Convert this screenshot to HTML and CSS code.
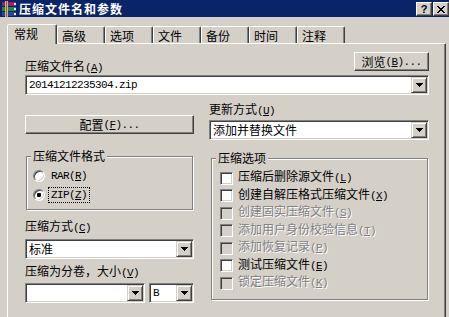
FILE: index.html
```html
<!DOCTYPE html>
<html lang="zh-CN">
<head>
<meta charset="utf-8">
<title>压缩文件名和参数</title>
<link rel="stylesheet" href="styles.css">
</head>
<body>
<div class="titlebar">
  <svg class="appicon" viewBox="0 0 16 16" shape-rendering="crispEdges">
    <rect x="1" y="1" width="14" height="4" fill="#9a1f74"/>
    <rect x="1" y="6" width="14" height="4" fill="#1f8a3c"/>
    <rect x="1" y="11" width="14" height="4" fill="#2543a8"/>
    <rect x="13" y="2" width="2" height="2" fill="#f0e8f0"/>
    <rect x="13" y="7" width="2" height="2" fill="#e8f4e8"/>
    <rect x="13" y="12" width="2" height="2" fill="#e8ecf8"/>
    <rect x="4" y="0" width="3" height="16" fill="#d2b07a"/>
    <rect x="5" y="0" width="1" height="16" fill="#8a6a3a"/>
  </svg>
  <span class="title">压缩文件名和参数</span>
  <div class="caption-btns">
    <span class="cbtn help">?</span>
    <span class="cbtn">
      <svg width="8" height="7" viewBox="0 0 8 7" shape-rendering="crispEdges"><path d="M0 0h2v1H0zM6 0h2v1H6zM1 1h2v1H1zM5 1h2v1H5zM2 2h4v1H2zM3 3h2v1H3zM2 4h4v1H2zM1 5h2v1H1zM5 5h2v1H5zM0 6h2v1H0zM6 6h2v1H6z" fill="#000"/></svg>
    </span>
  </div>
</div>

<div class="tabs">
  <div class="tab active">常规</div>
  <div class="tab">高级</div>
  <div class="tab">选项</div>
  <div class="tab">文件</div>
  <div class="tab">备份</div>
  <div class="tab">时间</div>
  <div class="tab">注释</div>
</div>

<div class="panel">
  <div class="row-top">
    <span class="label top-label">压缩文件名<span class="en">(<u>A</u>)</span></span>
    <span class="btn browse">浏览<span class="en">(<u>B</u>)...</span></span>
  </div>
  <div class="combo filename">
    <span class="value en">20141212235304.zip</span>
    <span class="dd"><svg width="7" height="4" viewBox="0 0 7 4" shape-rendering="crispEdges"><path d="M0 0h7v1H0zM1 1h5v1H1zM2 2h3v1H2zM3 3h1v1H3z" fill="#000"/></svg></span>
  </div>

  <div class="cols">
    <div class="col-left">
      <span class="btn cfg">配置<span class="en">(<u>F</u>)...</span></span>

      <div class="group fmt">
        <span class="legend">压缩文件格式</span>
        <div class="radio-row first">
          <span class="radio"></span>
          <span class="rlabel en">RAR(<u>R</u>)</span>
        </div>
        <div class="radio-row">
          <span class="radio checked"></span>
          <span class="rlabel en focus">ZIP(<u>Z</u>)</span>
        </div>
      </div>

      <div class="label method-label">压缩方式<span class="en">(<u>C</u>)</span></div>
      <div class="combo method">
        <span class="value">标准</span>
        <span class="dd"><svg width="7" height="4" viewBox="0 0 7 4" shape-rendering="crispEdges"><path d="M0 0h7v1H0zM1 1h5v1H1zM2 2h3v1H2zM3 3h1v1H3z" fill="#000"/></svg></span>
      </div>

      <div class="label vol-label">压缩为分卷，大小<span class="en">(<u>V</u>)</span></div>
      <div class="vol-row">
        <div class="combo vol">
          <span class="value"></span>
          <span class="dd"><svg width="7" height="4" viewBox="0 0 7 4" shape-rendering="crispEdges"><path d="M0 0h7v1H0zM1 1h5v1H1zM2 2h3v1H2zM3 3h1v1H3z" fill="#000"/></svg></span>
        </div>
        <div class="combo unit">
          <span class="value en">B</span>
          <span class="dd"><svg width="7" height="4" viewBox="0 0 7 4" shape-rendering="crispEdges"><path d="M0 0h7v1H0zM1 1h5v1H1zM2 2h3v1H2zM3 3h1v1H3z" fill="#000"/></svg></span>
        </div>
      </div>
    </div>

    <div class="col-right">
      <div class="label update-label">更新方式<span class="en">(<u>U</u>)</span></div>
      <div class="combo update">
        <span class="value">添加并替换文件</span>
        <span class="dd"><svg width="7" height="4" viewBox="0 0 7 4" shape-rendering="crispEdges"><path d="M0 0h7v1H0zM1 1h5v1H1zM2 2h3v1H2zM3 3h1v1H3z" fill="#000"/></svg></span>
      </div>

      <div class="group opts">
        <span class="legend">压缩选项</span>
        <div class="checks">
          <div class="check-row"><span class="checkbox"></span><span class="clabel">压缩后删除源文件<span class="en">(<u>L</u>)</span></span></div>
          <div class="check-row"><span class="checkbox"></span><span class="clabel">创建自解压格式压缩文件<span class="en">(<u>X</u>)</span></span></div>
          <div class="check-row disabled"><span class="checkbox"></span><span class="clabel">创建固实压缩文件<span class="en">(<u>S</u>)</span></span></div>
          <div class="check-row disabled"><span class="checkbox"></span><span class="clabel">添加用户身份校验信息<span class="en">(<u>T</u>)</span></span></div>
          <div class="check-row disabled"><span class="checkbox"></span><span class="clabel">添加恢复记录<span class="en">(<u>P</u>)</span></span></div>
          <div class="check-row"><span class="checkbox"></span><span class="clabel">测试压缩文件<span class="en">(<u>E</u>)</span></span></div>
          <div class="check-row disabled"><span class="checkbox"></span><span class="clabel">锁定压缩文件<span class="en">(<u>K</u>)</span></span></div>
        </div>
      </div>
    </div>
  </div>
</div>
</body>
</html>
```

FILE: styles.css
```css
* {
  box-sizing: border-box;
  margin: 0;
  padding: 0;
}

html, body {
  width: 449px;
  height: 317px;
  overflow: hidden;
}

body {
  background: #d4d0c8;
  font-family: "Noto Sans CJK SC", "Noto Sans", sans-serif;
  font-size: 12px;
  line-height: 14px;
  color: #000;
}

.en {
  font-family: "Liberation Mono", "DejaVu Sans Mono", monospace;
  font-size: 11px;
  letter-spacing: -0.6px;
}

u {
  text-decoration: underline;
  text-underline-offset: 1px;
}

/* ---------- title bar ---------- */
.titlebar {
  height: 17px;
  background: #0a246a;
  display: flex;
  align-items: center;
  color: #fff;
}

.appicon {
  width: 16px;
  height: 16px;
  margin-left: 1px;
  flex: none;
}

.title {
  margin-left: 2px;
  font-weight: bold;
  letter-spacing: 1px;
  line-height: 17px;
}

.caption-btns {
  margin-left: auto;
  margin-right: 0;
  align-self: flex-start;
  margin-top: 2px;
  display: flex;
  gap: 1px;
}

.cbtn {
  width: 16px;
  height: 14px;
  background: #d4d0c8;
  border: 1px solid;
  border-color: #fff #404040 #404040 #fff;
  box-shadow: inset -1px -1px 0 #808080;
  display: flex;
  align-items: center;
  justify-content: center;
  color: #000;
}

.cbtn.help {
  font-family: "Liberation Sans", sans-serif;
  font-weight: bold;
  font-size: 11px;
  line-height: 12px;
}

/* ---------- tabs ---------- */
.tabs {
  display: flex;
  align-items: flex-start;
  height: 17px;
  margin-top: 9px;
  padding-left: 7px;
}

.tab {
  width: 48px;
  height: 17px;
  flex: none;
  border: 1px solid;
  border-bottom: none;
  border-color: #fff #404040 transparent #fff;
  border-radius: 2px 2px 0 0;
  box-shadow: inset -1px 0 0 #808080;
  padding: 2px 0 0 4px;
}

.tab.active {
  width: 50px;
  height: 20px;
  margin-top: -2px;
  padding-left: 6px;
  background: #d4d0c8;
  position: relative;
  z-index: 2;
}

/* ---------- panel ---------- */
.panel {
  margin-left: 7px;
  width: 439px;
  height: 274px;
  border: 1px solid;
  border-bottom: none;
  border-color: #fff #404040 #404040 #fff;
  box-shadow: inset -1px 0 0 #808080;
  padding: 8px 16px 0 17px;
}

.row-top {
  display: flex;
  justify-content: space-between;
  align-items: flex-start;
  height: 19px;
}

.top-label {
  margin-top: 7px;
}

.btn {
  display: flex;
  align-items: center;
  justify-content: center;
  height: 19px;
  background: #d4d0c8;
  border: 1px solid;
  border-color: #fff #404040 #404040 #fff;
  box-shadow: inset -1px -1px 0 #808080;
  white-space: nowrap;
}

.browse {
  width: 75px;
}

/* ---------- combo boxes ---------- */
.combo {
  display: flex;
  align-items: center;
  height: 20px;
  background: #fff;
  border: 1px solid;
  border-color: #808080 #fff #fff #808080;
  box-shadow: inset 1px 1px 0 #404040, inset -1px -1px 0 #d4d0c8;
  padding: 1px 1px 1px 2px;
}

.combo .value {
  flex: 1;
  white-space: nowrap;
  padding-left: 1px;
  line-height: 16px;
}

.combo .dd {
  flex: none;
  width: 16px;
  height: 16px;
  display: flex;
  align-items: center;
  justify-content: center;
  background: #d4d0c8;
  border: 1px solid;
  border-color: #d4d0c8 #404040 #404040 #d4d0c8;
  box-shadow: inset 1px 1px 0 #fff, inset -1px -1px 0 #808080;
}

.combo .dd svg {
  display: block;
}

.filename {
  margin-top: 4px;
}

/* ---------- columns ---------- */
.cols {
  display: grid;
  grid-template-columns: 169px 220px;
  column-gap: 15px;
  align-items: start;
}

.col-left,
.col-right {
  display: flex;
  flex-direction: column;
}

.cfg {
  margin-top: 20px;
}

.label {
  white-space: nowrap;
}

.update-label {
  margin-top: 7px;
}

.update {
  margin-top: 2px;
}

/* ---------- group boxes ---------- */
.group {
  border: 1px solid #808080;
  box-shadow: 1px 1px 0 #fff, inset 1px 1px 0 #fff;
}

.legend {
  display: block;
  width: fit-content;
  margin: -8px 0 0 4px;
  padding: 0 2px;
  background: #d4d0c8;
  white-space: nowrap;
}

.fmt {
  margin-top: 22px;
  margin-left: 1px;
  width: 167px;
  height: 54px;
  padding-left: 6px;
}

.fmt .legend {
  margin-left: -2px;
}

.radio-row {
  display: flex;
  align-items: flex-start;
  height: 19px;
}

.radio-row.first {
  margin-top: 4px;
}

.radio {
  flex: none;
  width: 12px;
  height: 12px;
  margin-top: 3px;
  border-radius: 50%;
  background: #fff;
  border: 1px solid;
  border-color: #808080 #fff #fff #808080;
  box-shadow: inset 1px 1px 0 #404040, inset -1px -1px 0 #d4d0c8;
  display: flex;
  align-items: center;
  justify-content: center;
}

.radio.checked::after {
  content: "";
  width: 4px;
  height: 4px;
  border-radius: 1px;
  background: #000;
}

.rlabel {
  margin: 2px 0 0 4px;
  padding: 0 2px;
  height: 14px;
}

.rlabel.focus {
  outline: 1px dotted #000;
  outline-offset: 0;
}

.method-label {
  margin-top: 9px;
}

.method {
  margin-top: 4px;
}

.vol-label {
  margin-top: 5px;
}

.vol-row {
  display: flex;
  gap: 4px;
  margin-top: 3px;
}

.vol {
  width: 120px;
}

.unit {
  width: 45px;
}

.opts {
  margin-top: 18px;
  margin-left: 2px;
  width: 217px;
  height: 142px;
  padding-left: 8px;
}

.opts .legend {
  margin-left: -4px;
}

.checks {
  margin-top: 4px;
}

.check-row {
  display: flex;
  align-items: flex-start;
  height: 17.5px;
}

.checkbox {
  flex: none;
  width: 13px;
  height: 13px;
  margin-top: 2.5px;
  background: #fff;
  border: 1px solid;
  border-color: #808080 #fff #fff #808080;
  box-shadow: inset 1px 1px 0 #404040, inset -1px -1px 0 #d4d0c8;
}

.clabel {
  margin-left: 5px;
  white-space: nowrap;
}

.check-row.disabled .checkbox {
  background: #d4d0c8;
}

.check-row.disabled .clabel {
  color: #808080;
  text-shadow: 1px 1px 0 #fff;
}
```
